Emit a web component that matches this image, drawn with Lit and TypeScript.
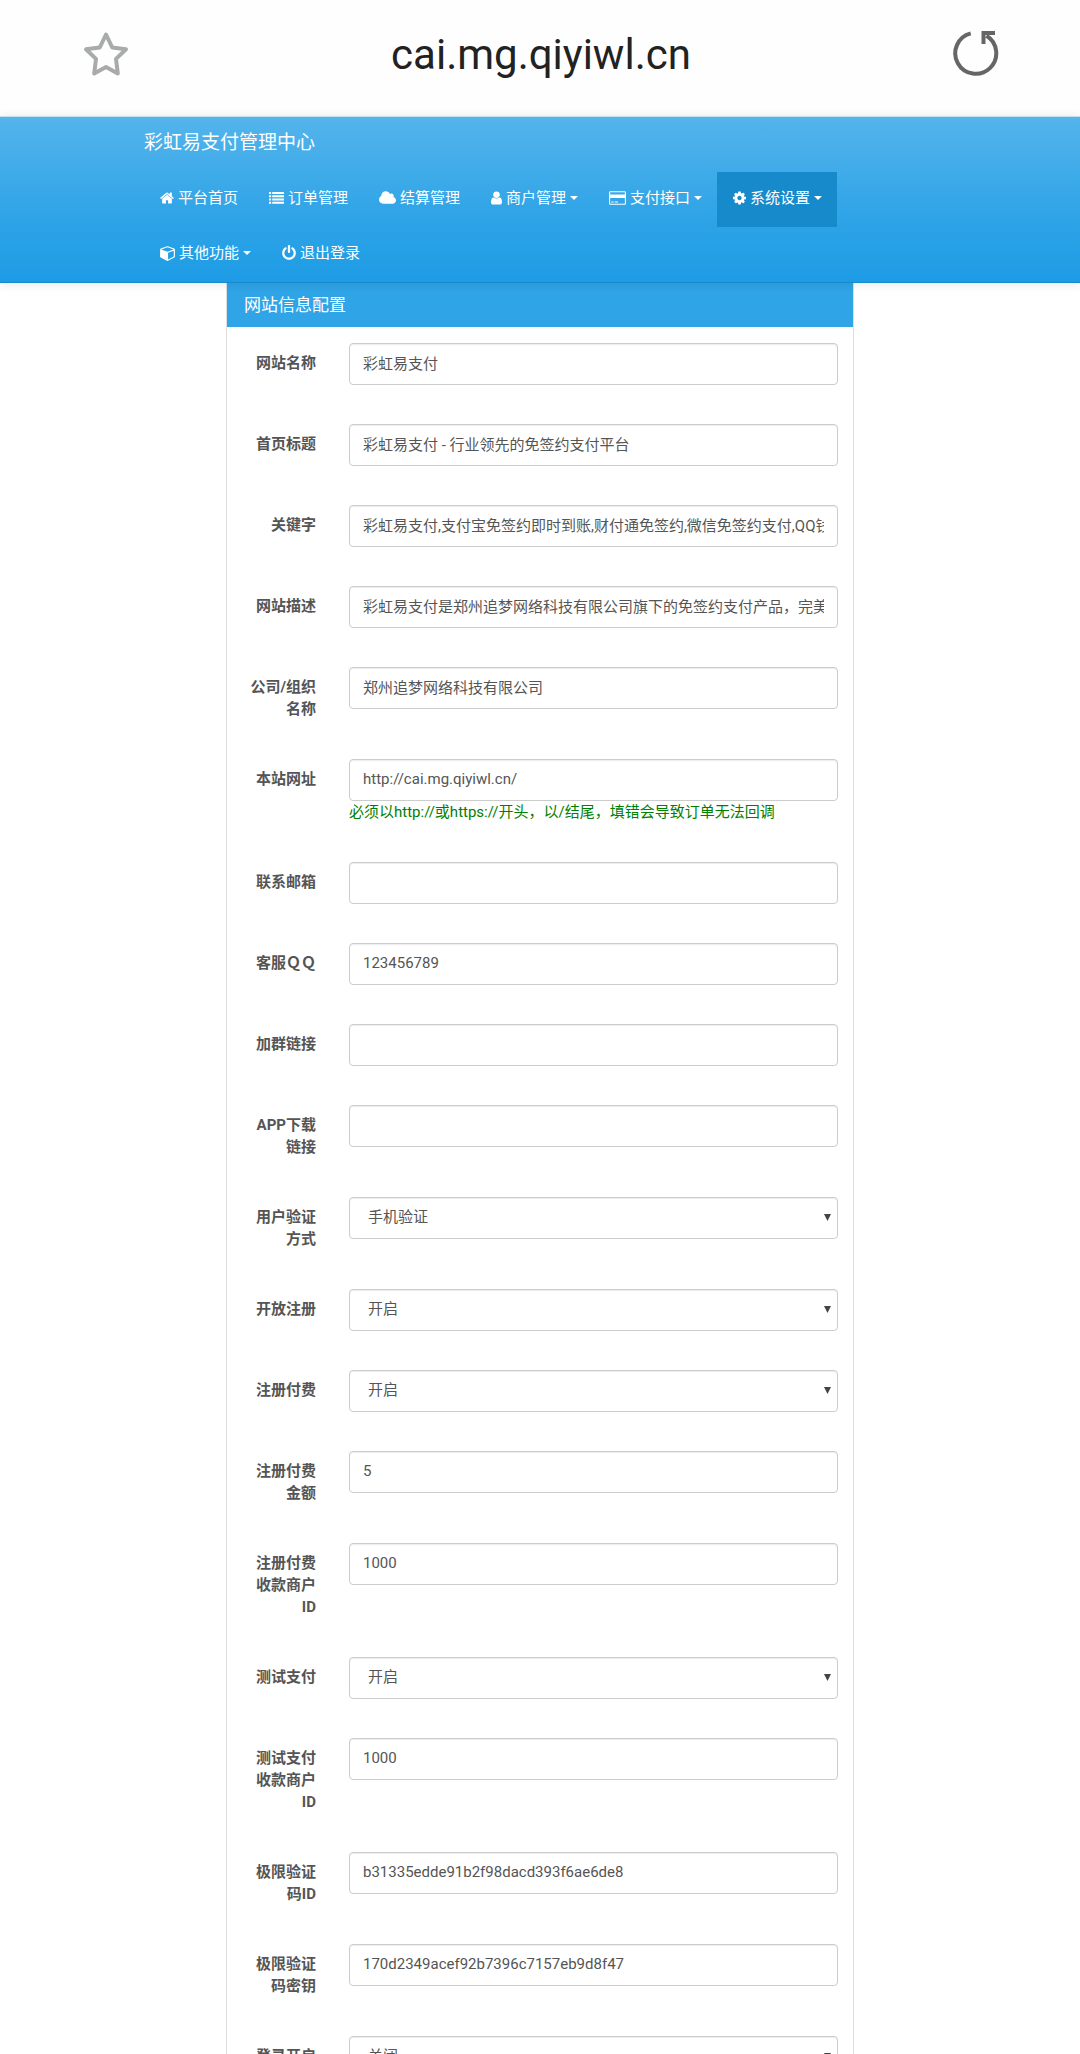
import { LitElement, html, css, svg, nothing } from "lit";
import { customElement } from "lit/decorators.js";

interface NavItem {
  text: string;
  icon: string;
  caret?: boolean;
  active?: boolean;
}

interface Field {
  id: string;
  label: string;
  value?: string;
  options?: string[];
  help?: string;
}

const ICONS: Record<string, { box: string; width: number; body: unknown }> = {
  home: {
    box: "64 0 1664 1792",
    width: 14,
    body: svg`<path d="M1472 992v480q0 26-19 45t-45 19h-384v-384h-256v384h-384q-26 0-45-19t-19-45v-480q0-1 .5-3t.5-3l575-474 575 474q1 2 1 6zm223-69l-62 74q-8 9-21 11h-3q-13 0-21-7l-692-577-692 577q-12 8-24 7-13-2-21-11l-62-74q-8-10-7-23.5t11-21.5l719-599q32-26 76-26t76 26l244 204v-195q0-14 9-23t23-9h192q14 0 23 9t9 23v408l219 182q10 8 11 21.5t-7 23.5z"/>`,
  },
  list: {
    box: "0 0 1792 1792",
    width: 15,
    body: svg`<path d="M0 192h256v224H0zM384 192h1408v224H384zM0 576h256v224H0zM384 576h1408v224H384zM0 960h256v224H0zM384 960h1408v224H384zM0 1344h256v224H0zM384 1344h1408v224H384z"/>`,
  },
  cloud: {
    box: "64 0 1920 1792",
    width: 17,
    body: svg`<path d="M1984 1152q0 159-112.5 271.5t-271.5 112.5h-1088q-185 0-316.5-131.5t-131.5-316.5q0-132 71-241.5t187-163.5q-2-28-2-43 0-212 150-362t362-150q158 0 286.5 88t187.5 230q70-62 166-62 106 0 181 75t75 181q0 75-41 138 129 30 213 134.5t84 239.5z"/>`,
  },
  user: {
    box: "256 0 1280 1792",
    width: 11,
    body: svg`<path d="M1536 1399q0 109-62.5 187t-150.5 78h-854q-88 0-150.5-78t-62.5-187q0-85 8.5-160.5t31.5-152 58.5-131 94-89 134.5-34.5q131 128 313 128t313-128q76 0 134.5 34.5t94 89 58.5 131 31.5 152 8.5 160.5zm-256-887q0 159-112.5 271.5t-271.5 112.5-271.5-112.5-112.5-271.5 112.5-271.5 271.5-112.5 271.5 112.5 112.5 271.5z"/>`,
  },
  card: {
    box: "0 0 1920 1792",
    width: 17,
    body: svg`<path fill-rule="evenodd" d="M160 128h1600a160 160 0 0 1 160 160v1216a160 160 0 0 1-160 160H160a160 160 0 0 1-160-160V288a160 160 0 0 1 160-160zM160 256a32 32 0 0 0-32 32v224h1664V288a32 32 0 0 0-32-32zM128 896v608a32 32 0 0 0 32 32h1600a32 32 0 0 0 32-32V896zM256 1280h256v128H256zM640 1280h384v128H640z"/>`,
  },
  cog: {
    box: "128 0 1536 1792",
    width: 13,
    body: svg`<path d="M1152 896q0-106-75-181t-181-75-181 75-75 181 75 181 181 75 181-75 75-181zm512-109v222q0 12-8 23t-20 13l-185 28q-19 54-39 91 35 50 107 138 10 12 10 25t-9 23q-27 37-99 108t-94 71q-12 0-26-9l-138-108q-44 23-91 38-16 136-29 186-7 28-36 28h-222q-14 0-24.5-8.5t-11.5-21.5l-28-184q-49-16-90-37l-141 107q-10 9-25 9-14 0-25-11-126-114-165-168-7-10-7-23 0-12 8-23 15-21 51-66.5t54-70.5q-27-50-41-99l-183-27q-13-2-21-12.5t-8-23.5v-222q0-12 8-23t19-13l186-28q14-46 39-92-40-57-107-138-10-12-10-24 0-10 9-23 26-36 98.5-107.5t94.5-71.5q13 0 26 10l138 107q44-23 91-38 16-136 29-186 7-28 36-28h222q14 0 24.5 8.5t11.5 21.5l28 184q49 16 90 37l142-107q9-9 24-9 13 0 25 10 129 119 165 170 7 8 7 22 0 12-8 23-15 21-51 66.5t-54 70.5q26 50 41 98l183 28q13 2 21 12.5t8 23.5z"/>`,
  },
  cube: {
    box: "0 0 1664 1792",
    width: 15,
    body: svg`<path fill-rule="evenodd" d="M896 1629l640-349v-636l-640 233v752zm-64-865l698-254-698-254-698 254zm832-252v768q0 35-18 65t-49 47l-704 384q-28 16-61 16t-61-16l-704-384q-31-17-49-47t-18-65v-768q0-40 23-73t61-47l704-256q22-8 44-8t44 8l704 256q38 14 61 47t23 73z"/>`,
  },
  power: {
    box: "128 0 1536 1792",
    width: 14,
    body: svg`<path d="M1664 896q0 156-61 298t-164 245-245 164-298 61-298-61-245-164-164-245-61-298q0-182 80.5-343t226.5-270q43-32 95.5-25t83.5 50q32 42 24.5 94.5t-49.5 84.5q-98 74-151.5 181t-53.5 228q0 104 40.5 198.5t109.5 163.5 163.5 109.5 198.5 40.5 198.5-40.5 163.5-109.5 109.5-163.5 40.5-198.5q0-121-53.5-228t-151.5-181q-42-32-49.5-84.5t24.5-94.5q31-43 84-50t95 25q146 109 226.5 270t80.5 343zm-640-768v640q0 52-38 90t-90 38-90-38-38-90v-640q0-52 38-90t90-38 90 38 38 90z"/>`,
  },
};

const NAV: NavItem[] = [
  { text: "平台首页", icon: "home" },
  { text: "订单管理", icon: "list" },
  { text: "结算管理", icon: "cloud" },
  { text: "商户管理", icon: "user", caret: true },
  { text: "支付接口", icon: "card", caret: true },
  { text: "系统设置", icon: "cog", caret: true, active: true },
  { text: "其他功能", icon: "cube", caret: true },
  { text: "退出登录", icon: "power" },
];

const FIELDS: Field[] = [
  { id: "sitename", label: "网站名称", value: "彩虹易支付" },
  { id: "title", label: "首页标题", value: "彩虹易支付 - 行业领先的免签约支付平台" },
  { id: "keywords", label: "关键字", value: "彩虹易支付,支付宝免签约即时到账,财付通免签约,微信免签约支付,QQ钱包免签约支付" },
  { id: "description", label: "网站描述", value: "彩虹易支付是郑州追梦网络科技有限公司旗下的免签约支付产品，完美解决支付难题" },
  { id: "orgname", label: "公司/组织名称", value: "郑州追梦网络科技有限公司" },
  { id: "localurl", label: "本站网址", value: "http://cai.mg.qiyiwl.cn/", help: "必须以http://或https://开头，以/结尾，填错会导致订单无法回调" },
  { id: "email", label: "联系邮箱", value: "" },
  { id: "kfqq", label: "客服ＱＱ", value: "123456789" },
  { id: "qqqun", label: "加群链接", value: "" },
  { id: "appurl", label: "APP下载链接", value: "" },
  { id: "verifytype", label: "用户验证方式", options: ["手机验证", "邮箱验证"] },
  { id: "reg_open", label: "开放注册", options: ["开启", "关闭"] },
  { id: "reg_pay", label: "注册付费", options: ["开启", "关闭"] },
  { id: "reg_pay_price", label: "注册付费金额", value: "5" },
  { id: "reg_pay_uid", label: "注册付费收款商户ID", value: "1000" },
  { id: "test_open", label: "测试支付", options: ["开启", "关闭"] },
  { id: "test_pay_uid", label: "测试支付收款商户ID", value: "1000" },
  { id: "captcha_id", label: "极限验证码ID", value: "b31335edde91b2f98dacd393f6ae6de8" },
  { id: "captcha_key", label: "极限验证码密钥", value: "170d2349acef92b7396c7157eb9d8f47" },
  { id: "captcha_login", label: "登录开启验证码", options: ["关闭", "开启"] },
];

@customElement("app-root")
export class AppRoot extends LitElement {
  static styles = css`
    :host {
      display: block;
      height: 100vh;
      overflow: hidden;
      background: #fff;
      color: #555;
      font: 15px/22px Roboto, "Noto Sans CJK SC", sans-serif;
    }
    * {
      box-sizing: border-box;
    }
    .browser {
      display: flex;
      align-items: center;
      justify-content: space-between;
      padding: 30px 80px 38px 82px;
      background: #fefefe;
    }
    .tool {
      display: block;
      padding: 0;
      border: 0;
      background: none;
    }
    .tool svg {
      display: block;
      width: 48px;
      height: 48px;
      fill: none;
    }
    .star {
      stroke: #a9abab;
      stroke-width: 4;
      stroke-linejoin: round;
    }
    .reload {
      stroke: #666;
      stroke-width: 4;
    }
    .address {
      padding-top: 2px;
      color: #222;
      font-size: 42px;
      line-height: 46px;
    }
    .navbar {
      position: relative;
      z-index: 1;
      border-top: 1px solid #c5dfee;
      border-bottom: 1px solid #178acc;
      background: linear-gradient(#54b4eb, #2fa4e7 60%, #1d9ce5);
      box-shadow: 0 1px 10px rgba(0, 0, 0, 0.1);
      color: #fff;
    }
    .container {
      max-width: 792px;
      margin: 0 auto;
    }
    .brand {
      display: block;
      padding: 12px 0 16px;
      color: #fff;
      font-size: 19px;
      line-height: 27px;
      text-decoration: none;
    }
    .menu {
      display: flex;
      flex-wrap: wrap;
      margin: 0;
      padding: 0 92px 0 0;
      list-style: none;
    }
    .link {
      display: flex;
      align-items: center;
      gap: 4px;
      height: 55px;
      padding: 0 15px 3px 16px;
      color: #fff;
      text-decoration: none;
    }
    .link.active {
      background: #178acc;
    }
    .icon {
      display: block;
      height: 16px;
      fill: currentColor;
    }
    .caret {
      border: 4px solid transparent;
      border-top-color: currentColor;
      border-bottom: 0;
    }
    .panel {
      max-width: 628px;
      margin: 0 auto;
      border: 1px solid #ddd;
      border-top: 0;
    }
    .heading {
      margin: 0;
      padding: 12px 17px 11px;
      background: #2fa4e7;
      color: #fff;
      font-size: 17px;
      font-weight: 400;
      line-height: 21px;
    }
    .form {
      display: flex;
      flex-direction: column;
      gap: 39px;
      padding: 16px 15px 39px 19px;
    }
    .row {
      display: grid;
      grid-template-columns: 70px 1fr;
      column-gap: 33px;
      align-items: start;
    }
    .label {
      padding-top: 9px;
      font-weight: 700;
      text-align: right;
    }
    .box {
      position: relative;
    }
    .control {
      display: block;
      width: 100%;
      height: 42px;
      padding: 0 13px 3px;
      border: 1px solid #ccc;
      border-radius: 4px;
      outline: 0;
      background: #fff;
      box-shadow: inset 0 1px 1px rgba(0, 0, 0, 0.075);
      color: #555;
      font: inherit;
      appearance: none;
    }
    .control.choice {
      padding: 0 18px 2px;
    }
    .arrow {
      position: absolute;
      top: 17px;
      right: 7px;
      width: 7px;
      height: 7px;
      fill: #444;
      pointer-events: none;
    }
    .help {
      display: block;
      color: #008000;
    }
  `;

  private renderNav(item: NavItem) {
    const icon = ICONS[item.icon];
    return html`<li>
      <a class="link ${item.active ? "active" : ""}" href="#">
        <svg class="icon" width=${icon.width} viewBox=${icon.box} aria-hidden="true">${icon.body}</svg>
        <span>${item.text}</span>
        ${item.caret ? html`<span class="caret"></span>` : nothing}
      </a>
    </li>`;
  }

  private renderField(field: Field) {
    return html`<div class="row">
      <label class="label" for=${field.id}>${field.label}</label>
      <div class="box">
        ${field.options
          ? html`<select class="control choice" id=${field.id}>
                ${field.options.map((option) => html`<option>${option}</option>`)}
              </select>
              <svg class="arrow" viewBox="0 0 7 7" aria-hidden="true"><path d="M0 0h7L3.5 7z" /></svg>`
          : html`<input class="control" id=${field.id} type="text" .value=${field.value ?? ""} />`}
        ${field.help ? html`<span class="help">${field.help}</span>` : nothing}
      </div>
    </div>`;
  }

  render() {
    return html`
      <header class="browser">
        <button class="tool" type="button" aria-label="收藏">
          <svg class="star" viewBox="0 0 48 48">
            <path d="M24 4.5L30.2 17.4 44 19.3 34 28.9 35.8 43.6 24 37 12.2 43.6 14 28.9 4 19.3 17.8 17.4z" />
          </svg>
        </button>
        <div class="address">cai.mg.qiyiwl.cn</div>
        <button class="tool" type="button" aria-label="刷新">
          <svg class="reload" viewBox="0 0 48 48">
            <path d="M18.7 3.4A20.5 20.5 0 1 0 34.5 5.8M43 3H31.5V14" />
          </svg>
        </button>
      </header>
      <nav class="navbar">
        <div class="container">
          <a class="brand" href="#">彩虹易支付管理中心</a>
          <ul class="menu">
            ${NAV.map((item) => this.renderNav(item))}
          </ul>
        </div>
      </nav>
      <main class="panel">
        <h3 class="heading">网站信息配置</h3>
        <form class="form">${FIELDS.map((field) => this.renderField(field))}</form>
      </main>
    `;
  }
}
